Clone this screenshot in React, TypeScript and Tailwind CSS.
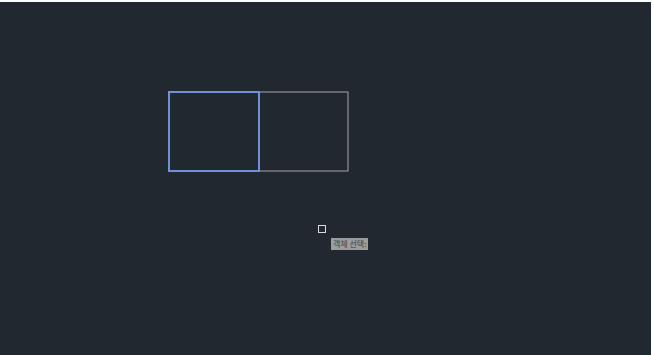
export default function App() {
  return (
    <div className="h-[355px] w-[654px] overflow-hidden bg-white pt-[2px] pr-[3px]">
      {/* drawing canvas */}
      <div className="relative h-full w-full bg-[#212830]">
        <svg className="absolute left-0 top-0" width="651" height="353" viewBox="0 0 651 353">
          {/* selected rectangle */}
          <rect x="259" y="90" width="89" height="79" fill="none" stroke="#a3a6aa" strokeWidth="1" />
          <rect x="169" y="90" width="90" height="79" fill="none" stroke="#6f92d6" strokeWidth="2" />
          {/* pickbox cursor */}
          <rect x="318.5" y="223.5" width="7" height="7" fill="none" stroke="#d8dadc" strokeWidth="1" />
        </svg>
        {/* command tooltip */}
        <div
          className="absolute left-[331px] top-[236px] flex h-[12px] items-center bg-[#9c9d9f] px-[2px] text-[8px] leading-none text-[#3a3d40]"
          style={{ fontFamily: '"Noto Sans CJK KR", "Noto Sans", sans-serif' }}
        >
          객체 선택:
        </div>
      </div>
    </div>
  );
}
